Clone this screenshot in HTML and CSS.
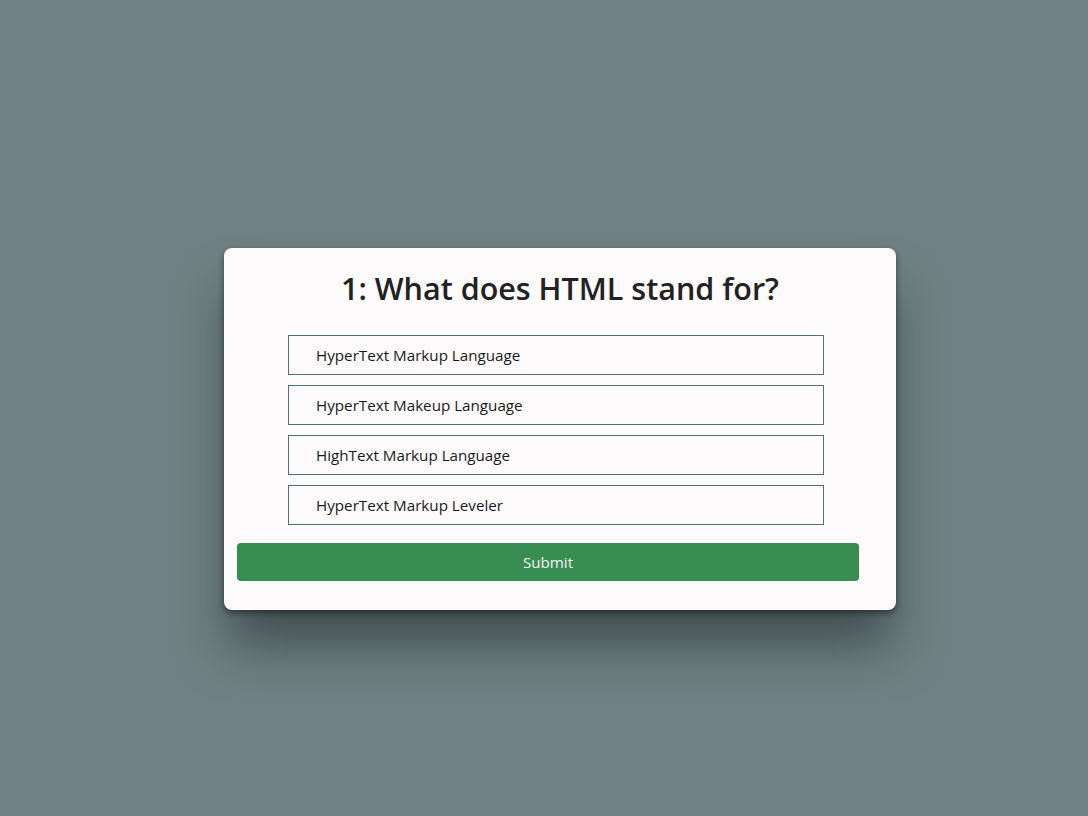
FILE: index.html
```html
<!DOCTYPE html>
<html lang="en">
<head>
  <meta charset="UTF-8" />
  <meta name="viewport" content="width=device-width, initial-scale=1.0"/>
  <title>Quiz</title>
  <link rel="stylesheet" href="styles.css">
</head>
<body>
  <div class="quiz">
    <h2 class="question">1: What does HTML stand for?</h2>
    <ul class="answers">
      <li>HyperText Markup Language</li>
      <li>HyperText Makeup Language</li>
      <li>HighText Markup Language</li>
      <li>HyperText Markup Leveler</li>
    </ul>
    <button class="submit">Submit</button>
  </div>
</body>
</html>
```

FILE: styles.css
```css
body {
  font-family: "Open Sans", "Noto Sans", sans-serif;
  display: flex;
  justify-content: center;
  align-items: flex-start;
  height: 100vh;
  margin: 0;
  background: #708084;
}

.quiz {
  background: #fcfafa;
  width: 672px;
  box-sizing: border-box;
  margin: 248px 0 0 32px;
  padding: 20px 37px 29px 13px;
  border-radius: 8px;
  box-shadow: 0 3px 6px rgba(0, 0, 0, 0.45), 0 40px 50px -5px rgba(20, 30, 30, 0.5);
}

.question {
  margin: 0 -37px 0 -13px;
  font-size: 30.5px;
  font-weight: 600;
  line-height: 41px;
  text-align: center;
  color: #222;
}

.answers {
  list-style: none;
  margin: 26px 0 18px 51px;
  padding: 0;
  width: 536px;
}

.answers li {
  height: 40px;
  box-sizing: border-box;
  border: 1px solid #50707a;
  padding: 0 27px;
  display: flex;
  align-items: center;
  font-size: 15.2px;
  color: #1a1a1a;
  margin-bottom: 10px;
}

.answers li:last-child {
  margin-bottom: 0;
}

.submit {
  display: block;
  width: 100%;
  height: 38px;
  border: none;
  border-radius: 4px;
  background: #388d52;
  color: #f2f2f2;
  font-family: inherit;
  font-size: 15.2px;
  cursor: pointer;
}
```
